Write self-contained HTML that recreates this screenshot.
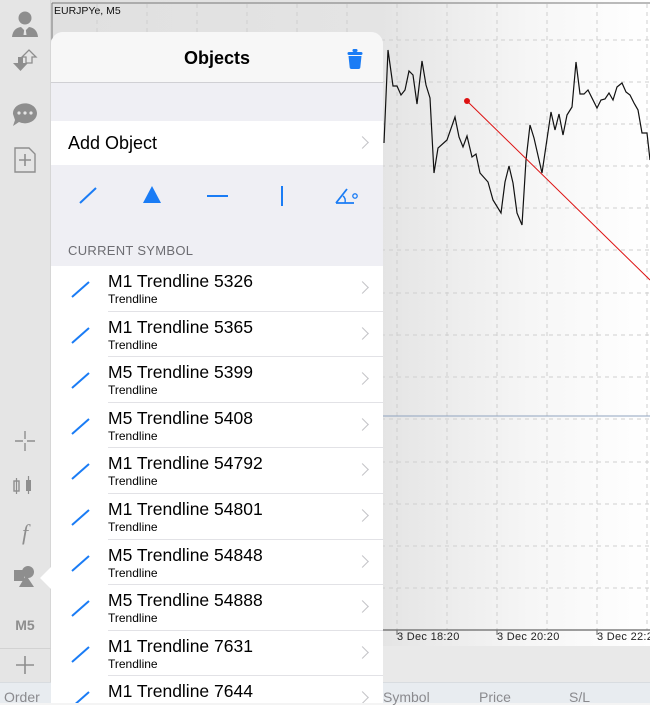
<!DOCTYPE html>
<html><head><meta charset="utf-8"><style>
*{margin:0;padding:0;box-sizing:border-box}
body{width:650px;height:703px;overflow:hidden;position:relative;background:#f4f4f4;font-family:"Liberation Sans",Arial,sans-serif}
#side{position:absolute;left:0;top:0;width:51px;height:703px;background:#e5e5e5;border-right:1px solid #d6d6d6}
#chart{position:absolute;left:51px;top:0;width:599px;height:682px;background:linear-gradient(90deg,#e0e0e0 0%,#e4e4e4 55%,#f6f6f6 80%,#fff 100%)}
#bottom{position:absolute;left:0;top:682px;width:650px;height:21px;background:#e8ecf0;border-top:1px solid #d8dce0}
#panel{position:absolute;left:51px;top:32px;width:332px;height:671px;background:#efeff4;border-radius:12px 12px 0 0;overflow:hidden}
.hdr{height:51px;background:#f7f7f7;border-bottom:1px solid #d0d0d4;text-align:center;font-weight:bold;font-size:18px;line-height:52px;color:#000;position:relative}
.add{position:absolute;top:89px;left:0;width:332px;height:44px;background:#fff;font-size:18px;line-height:44px;padding-left:17px}
.chev{position:absolute;right:16px;width:9px;height:9px;border-right:1.6px solid #c4c4c8;border-top:1.6px solid #c4c4c8;transform:rotate(45deg)}
.sec{position:absolute;top:211px;left:17px;font-size:13px;color:#6d6d72;letter-spacing:.3px}
.row{position:absolute;left:0;width:332px;height:45.6px;background:#fff}
.row .t{position:absolute;left:57px;top:5px;font-size:17.5px;color:#000;white-space:nowrap}
.row .s{position:absolute;left:57px;top:26px;font-size:12px;color:#000}
.row .sep{position:absolute;left:57px;right:0;bottom:0;height:1px;background:#e2e2e6}
.row .ic{position:absolute;left:20px;top:14px}
.row .chev{top:17px}
.tl{position:absolute;top:631px;font-size:11px;color:#222;letter-spacing:.3px;white-space:nowrap}
.bl{position:absolute;top:689px;font-size:14px;color:#8a8a8e}
</style></head><body>
<div id="side">
<svg width="51" height="703" style="position:absolute;left:0;top:0" fill="#8e8e8e">
<circle cx="25" cy="18" r="6.5"/><path d="M12 37 Q13 28 21 27 L25 31 L29 27 Q37 28 38 37Z"/><path d="M24.3 29h1.4l.8 6h-3z" fill="#e5e5e5"/>
<path d="M13 63h5v-6h5v6h5l-7.5 8z"/><path d="M26 63v-6h-4l7-7 7 7h-4v6z" fill="none" stroke="#8e8e8e" stroke-width="1.3"/>
<path d="M13 114 a12 10 0 1 1 6 8 l-6 4 l2-6z"/><circle cx="19" cy="113" r="1.6" fill="#e5e5e5"/><circle cx="25" cy="113" r="1.6" fill="#e5e5e5"/><circle cx="31" cy="113" r="1.6" fill="#e5e5e5"/>
<path d="M15 148h14l6 6v18H15z" fill="none" stroke="#8e8e8e" stroke-width="1.4"/><path d="M25 154v12M19 160h12" stroke="#8e8e8e" stroke-width="1.6"/>
<path d="M25 431v8M25 443v8M15 441h8M27 441h8" stroke="#8e8e8e" stroke-width="1.4"/>
<rect x="14" y="481" width="5" height="10" fill="none" stroke="#8e8e8e" stroke-width="1.4"/><path d="M16.5 478v16M28.5 476v18" stroke="#8e8e8e" stroke-width="1.2"/><rect x="26" y="480" width="5" height="11"/>
<text x="25" y="540" font-family="Liberation Serif" font-style="italic" font-size="22" text-anchor="middle">f</text>
<rect x="14" y="570" width="10" height="11"/><circle cx="28" cy="572" r="6"/><path d="M26 575 L34 587 H19Z"/>
<text x="25" y="630" font-weight="bold" font-size="14" text-anchor="middle">M5</text>
<rect x="0" y="648" width="51" height="1" fill="#d2d2d2"/>
<path d="M25 656v18M16 665h18" stroke="#8e8e8e" stroke-width="1.6"/>
</svg>
</div>
<div id="chart">
<svg width="599" height="682" style="position:absolute;left:0;top:0">
<path d="M1 3H599M1 3V630" stroke="#777" stroke-width="1"/>
<g stroke="#cfcfcf" stroke-dasharray="4,4" stroke-width="1">
<path d="M46 4V630M96 4V630M146 4V630M196 4V630M246 4V630M296 4V630M346 4V630M396 4V630M446 4V630M496 4V630M546 4V630M596 4V630"/>
<path d="M2 40H599M2 82H599M2 124H599M2 166H599M2 208H599M2 250H599M2 293H599M2 335H599M2 377H599M2 419H599M2 462H599M2 504H599M2 546H599M2 588H599"/>
</g>
<path d="M1 416H599" stroke="#8fa3bf" stroke-width="1"/>
<path d="M1 630H599" stroke="#666" stroke-width="1.2"/>
<path d="M346 630v5M446 630v5M546 630v5" stroke="#666"/>
<rect x="0" y="646" width="599" height="36" fill="#e9e9e9"/>
<g transform="translate(-51,0)">
<polyline fill="none" stroke="#111" stroke-width="1.2" points="384,143 388,50 393,86 397,86 401,95 405,90 409,71 413,75 417,104 422,61 426,85 430,98 434,173 438,148 447,140 455,117 459,137 463,147 467,136 472,157 476,154 480,173 488,182 493,200 501,213 505,182 509,166 513,183 517,213 522,225 526,160 530,125 534,138 542,173 551,112 555,130 559,114 563,135 567,115 572,107 576,62 580,94 584,94 588,90 597,108 601,100 605,99 609,93 613,100 617,87 622,83 626,92 630,95 634,103 638,110 642,133 647,133 650,160"/>
<path d="M467 101L650 280" stroke="#d11" stroke-width="1"/>
<circle cx="467" cy="101" r="3" fill="#d11"/>
</g>
<text x="3" y="14" font-size="10.5" fill="#111">EURJPYe, M5</text>
</svg>
</div>
<div class="tl" style="left:397px">3 Dec 18:20</div>
<div class="tl" style="left:497px">3 Dec 20:20</div>
<div class="tl" style="left:597px">3 Dec 22:20</div>
<div id="bottom"></div>
<div class="bl" style="left:4px">Order</div>
<div class="bl" style="left:383px">Symbol</div>
<div class="bl" style="left:479px">Price</div>
<div class="bl" style="left:569px">S/L</div>
<svg width="12" height="24" style="position:absolute;left:40px;top:566px"><path d="M12 0L0 12L12 24Z" fill="#fff"/></svg>
<div id="panel">
<div class="hdr">Objects
<svg width="16" height="20" style="position:absolute;right:20px;top:17px" fill="#1a7cf5"><rect x="5.5" y="0" width="5" height="3" rx="1.2"/><rect x="0.5" y="3" width="15" height="3" rx="1.5"/><path d="M1.5 7H14.5L13.3 18.5Q13 20 11.5 20H4.5Q3 20 2.7 18.5Z"/></svg>
</div>
<div class="add">Add Object<span class="chev" style="top:17px"></span></div>
<svg width="332" height="40" style="position:absolute;left:0;top:145px" stroke="#1a7cf5" stroke-width="2" fill="#1a7cf5">
<path d="M29 26L45 11"/><path d="M101 9L110 26H92Z" stroke="none"/><path d="M156 19H177"/><path d="M231 9V29"/>
<path d="M285 26L296 12M285 26H303" fill="none" stroke-width="1.8"/><path d="M292 19 Q295 21 294 26" fill="none" stroke-width="1.4"/><circle cx="304" cy="19" r="2.2" fill="none" stroke-width="1.3"/>
</svg>
<div class="sec">CURRENT SYMBOL</div>
<div class="row" style="top:234px"><svg class="ic" width="20" height="18"><path d="M1 17L18 2" stroke="#1a7cf5" stroke-width="2"/></svg><div class="t">M1 Trendline 5326</div><div class="s">Trendline</div><span class="chev"></span><div class="sep"></div></div>
<div class="row" style="top:279.6px"><svg class="ic" width="20" height="18"><path d="M1 17L18 2" stroke="#1a7cf5" stroke-width="2"/></svg><div class="t">M1 Trendline 5365</div><div class="s">Trendline</div><span class="chev"></span><div class="sep"></div></div>
<div class="row" style="top:325.2px"><svg class="ic" width="20" height="18"><path d="M1 17L18 2" stroke="#1a7cf5" stroke-width="2"/></svg><div class="t">M5 Trendline 5399</div><div class="s">Trendline</div><span class="chev"></span><div class="sep"></div></div>
<div class="row" style="top:370.8px"><svg class="ic" width="20" height="18"><path d="M1 17L18 2" stroke="#1a7cf5" stroke-width="2"/></svg><div class="t">M5 Trendline 5408</div><div class="s">Trendline</div><span class="chev"></span><div class="sep"></div></div>
<div class="row" style="top:416.4px"><svg class="ic" width="20" height="18"><path d="M1 17L18 2" stroke="#1a7cf5" stroke-width="2"/></svg><div class="t">M1 Trendline 54792</div><div class="s">Trendline</div><span class="chev"></span><div class="sep"></div></div>
<div class="row" style="top:462px"><svg class="ic" width="20" height="18"><path d="M1 17L18 2" stroke="#1a7cf5" stroke-width="2"/></svg><div class="t">M1 Trendline 54801</div><div class="s">Trendline</div><span class="chev"></span><div class="sep"></div></div>
<div class="row" style="top:507.6px"><svg class="ic" width="20" height="18"><path d="M1 17L18 2" stroke="#1a7cf5" stroke-width="2"/></svg><div class="t">M5 Trendline 54848</div><div class="s">Trendline</div><span class="chev"></span><div class="sep"></div></div>
<div class="row" style="top:553.2px"><svg class="ic" width="20" height="18"><path d="M1 17L18 2" stroke="#1a7cf5" stroke-width="2"/></svg><div class="t">M5 Trendline 54888</div><div class="s">Trendline</div><span class="chev"></span><div class="sep"></div></div>
<div class="row" style="top:598.8px"><svg class="ic" width="20" height="18"><path d="M1 17L18 2" stroke="#1a7cf5" stroke-width="2"/></svg><div class="t">M1 Trendline 7631</div><div class="s">Trendline</div><span class="chev"></span><div class="sep"></div></div>
<div class="row" style="top:644.4px"><svg class="ic" width="20" height="18"><path d="M1 17L18 2" stroke="#1a7cf5" stroke-width="2"/></svg><div class="t">M1 Trendline 7644</div><div class="s">Trendline</div><span class="chev"></span><div class="sep"></div></div>
</div>
</body></html>
